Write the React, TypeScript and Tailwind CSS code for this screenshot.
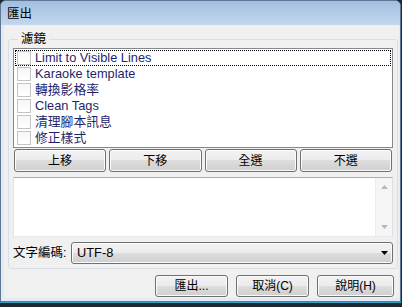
import React from "react";

const font = "font-['Liberation_Sans','Noto_Sans_CJK_TC',sans-serif]";
const btnBase =
  "h-[22px] flex items-center text-[12px] leading-none text-black border border-[#707070] rounded-[3px] bg-[linear-gradient(to_bottom,#f2f2f2_0%,#ebebeb_50%,#dddddd_50%,#cfcfcf_100%)] shadow-[inset_0_0_0_1px_#fbfbfb]";
const btn = `${btnBase} justify-center`;

const rows = [
  "Limit to Visible Lines",
  "Karaoke template",
  "轉換影格率",
  "Clean Tags",
  "清理腳本訊息",
  "修正樣式",
];

export default function App() {
  return (
    <div className={`w-[402px] h-[307px] bg-[#1c2833] overflow-hidden flex flex-col ${font}`}>
      <div className="w-[401px] h-[302px] border border-[#5d7795] rounded-t-[6px] bg-[#e4ebf3] flex flex-col overflow-hidden">
        {/* title bar */}
        <div className="h-[24px] shrink-0 bg-[linear-gradient(to_bottom,#a2bede,#c3d7ee)] flex items-center pl-[6px] pt-[2px] text-[12.5px] leading-none text-black">
          匯出
        </div>
        {/* client */}
        <div className="flex-1 ml-[3px] mr-[1px] mb-[3px] bg-[#f0f0f0] flex flex-col pl-[4px] pr-[1px]">
          <fieldset className="mt-[6px] border border-[#d5dfe5] rounded-[3px] pl-[4px] pr-[4px] pb-[4px] pt-0 min-w-0">
            <legend className="ml-[5px] px-[3px] text-[12.5px] leading-[16px] text-black">濾鏡</legend>
            {/* checklist */}
            <div className="h-[100px] border border-[#828790] bg-white pt-px px-px mt-px">
              {rows.map((r, i) => (
                <div
                  key={r}
                  className={`h-[16px] flex items-center ${i === 0 ? "border border-dotted border-black" : "border border-transparent"}`}
                >
                  <div className="w-[14px] h-[14px] border border-[#c4c4c4] bg-[linear-gradient(to_bottom,#f6f6f6,#ffffff)] ml-px shrink-0" />
                  <span className="ml-[4px] text-[12.8px] leading-none text-[#1f1f6e] whitespace-nowrap">{r}</span>
                </div>
              ))}
            </div>
            {/* move buttons */}
            <div className="grid grid-cols-4 gap-[3px] mt-px px-px">
              <div className={`${btn} h-[23px]`}>上移</div>
              <div className={`${btn} h-[23px]`}>下移</div>
              <div className={`${btn} h-[23px]`}>全選</div>
              <div className={`${btn} h-[23px]`}>不選</div>
            </div>
            {/* text area */}
            <div className="mt-[5px] h-[60px] border border-[#abadb3] border-b-[#e3e9ef] border-l-[#e2e3ea] border-r-[#dbdfe6] bg-white flex justify-end">
              <div className="w-[17px] bg-[#f5f5f5] border-l border-[#ececec] flex flex-col items-center justify-between py-[7px]">
                <svg width="7" height="4" viewBox="0 0 7 4"><path d="M0 4 L3.5 0 L7 4 Z" fill="#b8b8b8" /></svg>
                <svg width="7" height="4" viewBox="0 0 7 4"><path d="M0 0 L3.5 4 L7 0 Z" fill="#b8b8b8" /></svg>
              </div>
            </div>
            {/* encoding */}
            <div className="mt-[5px] flex items-center">
              <span className="text-[12.5px] leading-none text-black whitespace-nowrap w-[58px]">文字編碼:</span>
              <div className={`${btnBase} flex-1 justify-between pl-[5px] pr-[4px]`}>
                <span className="text-[12.8px]">UTF-8</span>
                <svg width="7" height="4" viewBox="0 0 7 4"><path d="M0 0 L3.5 4 L7 0 Z" fill="#000" /></svg>
              </div>
            </div>
          </fieldset>
          {/* dialog buttons */}
          <div className="mt-[6px] flex justify-end gap-[8px] pr-[4px]">
            <div className={`${btn} w-[73px]`}>匯出...</div>
            <div className={`${btn} w-[73px]`}>取消(C)</div>
            <div className={`${btn} w-[77px]`}>說明(H)</div>
          </div>
        </div>
      </div>
      <div className="h-px bg-[#3a9cc8] w-[401px]" />
    </div>
  );
}
